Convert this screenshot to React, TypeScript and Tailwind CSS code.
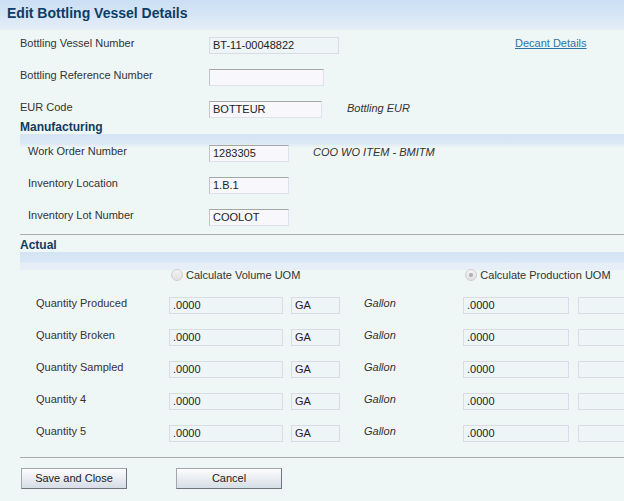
import React from 'react';

const font = { fontFamily: '"Liberation Sans", Arial, sans-serif' };

function Field({ value, w, editable }: { value: string; w: string; editable?: boolean }) {
  const base = 'h-[17px] shrink-0 px-[3px] text-[11px] leading-[15px] text-[#222] border';
  const look = editable
    ? 'bg-[#f7f7fc] border-[#e0e1ea] border-t-[#a6a6a6] border-l-[#c4c4c4]'
    : 'bg-[#eef5f6] border-[#d9dbe7]';
  return <div className={`${base} ${look} ${w}`}>{value}</div>;
}

function Radio({ checked }: { checked?: boolean }) {
  return (
    <span className="flex h-[12px] w-[12px] shrink-0 items-center justify-center rounded-full border border-[#cfcfcf] bg-gradient-to-b from-[#f2f2f2] to-[#e2e2e2]">
      {checked && <span className="h-[4px] w-[4px] rounded-full bg-[#b0b0b0]" />}
    </span>
  );
}

const quantities = ['Quantity Produced', 'Quantity Broken', 'Quantity Sampled', 'Quantity 4', 'Quantity 5'];

export default function App() {
  return (
    <div className="h-[501px] w-[624px] overflow-hidden bg-[#eff6f6] text-[11px] text-[#333]" style={font}>
      {/* Title bar */}
      <div className="h-[30px] bg-gradient-to-b from-[#cbdff5] via-[#d6e5f5] to-[#e6eef7]">
        <h1 className="pl-[7px] pt-[5px] text-[14px] font-bold leading-[17px] text-[#0d3c64]">
          Edit Bottling Vessel Details
        </h1>
      </div>

      {/* Header fields */}
      <div className="pl-[20px] pt-[2px]">
        <div className="flex h-[32px] items-start">
          <span className="w-[189px] shrink-0 pt-[4px] leading-[14px]">Bottling Vessel Number</span>
          <div className="mt-[5px]">
            <Field value="BT-11-00048822" w="w-[130px]" />
          </div>
          <a className="ml-[176px] pt-[4px] leading-[14px] text-[#2c74a8] underline">Decant Details</a>
        </div>
        <div className="flex h-[32px] items-start">
          <span className="w-[189px] shrink-0 pt-[4px] leading-[14px]">Bottling Reference Number</span>
          <div className="mt-[5px]">
            <Field value="" w="w-[115px]" editable />
          </div>
        </div>
        <div className="flex h-[25px] items-start">
          <span className="w-[189px] shrink-0 pt-[4px] leading-[14px]">EUR Code</span>
          <div className="mt-[5px]">
            <Field value="BOTTEUR" w="w-[113px]" editable />
          </div>
          <span className="ml-[25px] pt-[5px] italic leading-[14px]">Bottling EUR</span>
        </div>
        <div className="h-[13px] text-[12px] font-bold leading-[13px] text-[#0f3a60]">Manufacturing</div>
      </div>

      {/* Manufacturing */}
      <div className="ml-[20px] bg-[linear-gradient(to_bottom,#d5e4f4_0px,#dbe7f5_9px,#eff6f6_14px)]">
        {[
          ['Work Order Number', '1283305', 'COO WO ITEM - BMITM'],
          ['Inventory Location', '1.B.1', ''],
          ['Inventory Lot Number', 'COOLOT', ''],
        ].map(([label, value, desc]) => (
          <div key={label} className="flex h-[32px] items-start">
            <span className="w-[189px] shrink-0 pl-[8px] pt-[10px] leading-[14px]">{label}</span>
            <div className="mt-[11px]">
              <Field value={value} w="w-[80px]" editable />
            </div>
            {desc && <span className="ml-[24px] pt-[11px] italic leading-[14px]">{desc}</span>}
          </div>
        ))}
      </div>

      <div className="ml-[20px] mt-[4px] border-t border-[#a8acb1]" />

      {/* Actual */}
      <div className="ml-[20px]">
        <div className="h-[17px] pt-[4px] text-[12px] font-bold leading-[13px] text-[#0f3a60]">Actual</div>
        <div className="bg-[linear-gradient(to_bottom,#d5e4f4_0px,#d8e6f5_10px,#e6eef8_11px,#e6eef8_18px,#eff6f6_18px)]">
          <div className="flex h-[32px] items-end pb-[2px]">
            <div className="ml-[151px] flex items-center gap-[3px] leading-[14px]">
              <Radio />
              <span>Calculate Volume UOM</span>
            </div>
            <div className="ml-[165px] flex items-center gap-[3px] leading-[14px]">
              <Radio checked />
              <span>Calculate Production UOM</span>
            </div>
          </div>
          {quantities.map((q) => (
            <div key={q} className="flex h-[32px] items-start">
              <span className="w-[149px] shrink-0 pl-[16px] pt-[12px] leading-[14px]">{q}</span>
              <div className="mt-[13px] flex">
                <Field value=".0000" w="w-[114px]" />
                <div className="ml-[8px]">
                  <Field value="GA" w="w-[49px]" />
                </div>
              </div>
              <span className="ml-[24px] w-[99px] shrink-0 pt-[12px] italic leading-[14px]">Gallon</span>
              <div className="mt-[13px] flex">
                <Field value=".0000" w="w-[106px]" />
                <div className="ml-[9px]">
                  <Field value="" w="w-[100px]" />
                </div>
              </div>
            </div>
          ))}
        </div>
      </div>

      <div className="ml-[20px] mt-[13px] border-t border-[#a8acb1]" />

      {/* Buttons */}
      <div className="ml-[21px] mt-[10px] flex gap-[49px]">
        {['Save and Close', 'Cancel'].map((b) => (
          <button
            key={b}
            className="h-[21px] w-[106px] border border-[#a3a7ad] border-b-[#70757b] border-r-[#70757b] bg-gradient-to-b from-[#fdfdfe] to-[#d6dde6] text-[11px] leading-[19px] text-[#222]"
            style={font}
          >
            {b}
          </button>
        ))}
      </div>
    </div>
  );
}
